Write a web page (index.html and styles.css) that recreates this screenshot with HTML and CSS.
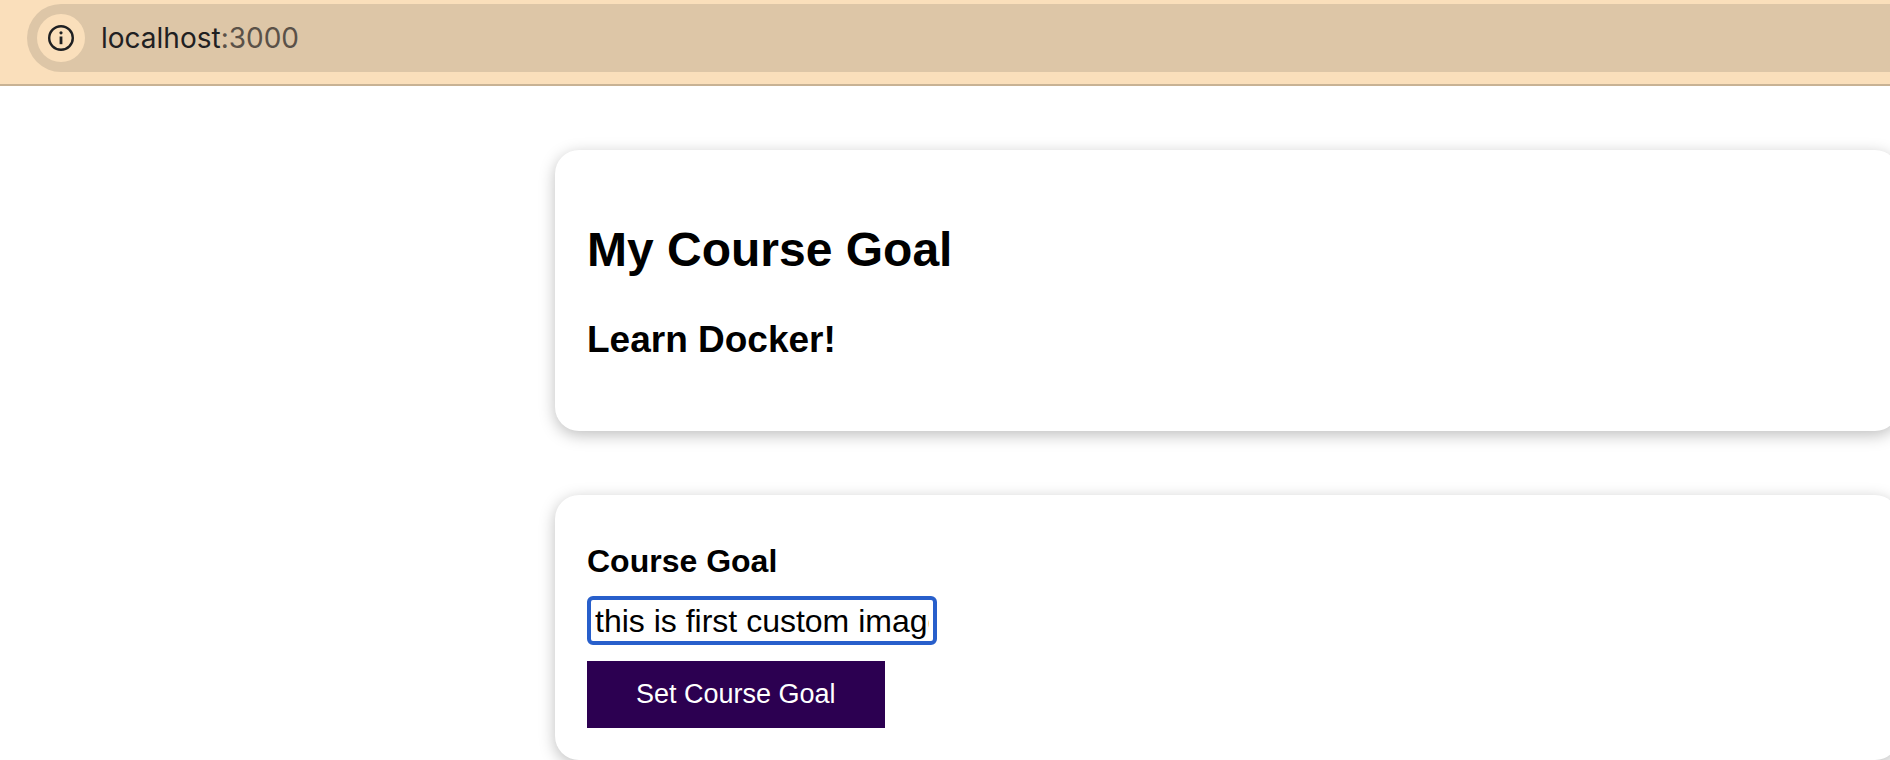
FILE: index.html
```html
<!DOCTYPE html>
<html lang="en">
<head>
<meta charset="utf-8">
<title>Course Goal</title>
<link rel="stylesheet" href="styles.css">
</head>
<body>
<header class="toolbar">
  <div class="address">
    <button class="site-info" type="button" aria-label="View site information">
      <svg class="site-info-icon" viewBox="0 0 26 26" aria-hidden="true">
        <circle cx="13" cy="13" r="11.8" fill="none" stroke="currentColor" stroke-width="2.4"/>
        <circle cx="13" cy="7.8" r="1.6" fill="currentColor"/>
        <path d="M13 11.5v7.7" stroke="currentColor" stroke-width="2.8"/>
      </svg>
    </button>
    <span class="url">localhost<span class="port">:3000</span></span>
  </div>
</header>
<main class="page">
  <section class="card">
    <h2 class="title">My Course Goal</h2>
    <h3 class="goal">Learn Docker!</h3>
  </section>
  <section class="card">
    <form class="form">
      <label class="label" for="goal">Course Goal</label>
      <input class="input" id="goal" type="text" value="this is first custom image">
      <button class="submit" type="submit">Set Course Goal</button>
    </form>
  </section>
</main>
</body>
</html>
```

FILE: styles.css
```css
* {
  box-sizing: border-box;
}

body {
  margin: 0;
  overflow-x: hidden;
  background: #fff;
  color: #000;
  font-family: "Liberation Sans", Arial, sans-serif;
}

.toolbar {
  padding: 4px 0 12px 27px;
  background: #fadfbb;
  border-bottom: 2px solid #c8b294;
}

.address {
  display: flex;
  align-items: center;
  gap: 16px;
  padding: 10px;
  background: #ddc6a7;
  border-radius: 34px 0 0 34px;
}

.site-info {
  display: flex;
  align-items: center;
  justify-content: center;
  width: 48px;
  height: 48px;
  padding: 0;
  border: 0;
  border-radius: 50%;
  background: #fadfbb;
  color: #1f2022;
}

.site-info-icon {
  width: 26px;
  height: 26px;
}

.url {
  color: #1f2022;
  font: 28px/34px Inter, sans-serif;
}

.port {
  color: #5a5148;
}

.page {
  display: flex;
  flex-direction: column;
  gap: 64px;
  margin-right: -9px;
  padding: 64px 0 0 555px;
}

.card {
  padding: 32px;
  background: #fff;
  border-radius: 24px;
  box-shadow: 0 4px 16px rgba(0, 0, 0, 0.26);
}

.title {
  margin: 40px 0;
  font-size: 48px;
  line-height: 56px;
}

.goal {
  margin: 0 0 37px;
  font-size: 37px;
  line-height: 44px;
}

.form {
  display: flex;
  flex-direction: column;
  align-items: flex-start;
  gap: 16px;
  padding-top: 16px;
}

.label {
  font-size: 32px;
  font-weight: bold;
  line-height: 37px;
}

.input {
  width: 350px;
  height: 49px;
  padding: 3px 4px 1px;
  border: 4px solid #285fcb;
  border-radius: 6px;
  outline: 0;
  background: #fff;
  color: #000;
  font: 32px "Liberation Sans", Arial, sans-serif;
}

.submit {
  padding: 16px 49px;
  border: 0;
  background: #2c0051;
  color: #fff;
  font: 27px/35px "Liberation Sans", Arial, sans-serif;
}
```
